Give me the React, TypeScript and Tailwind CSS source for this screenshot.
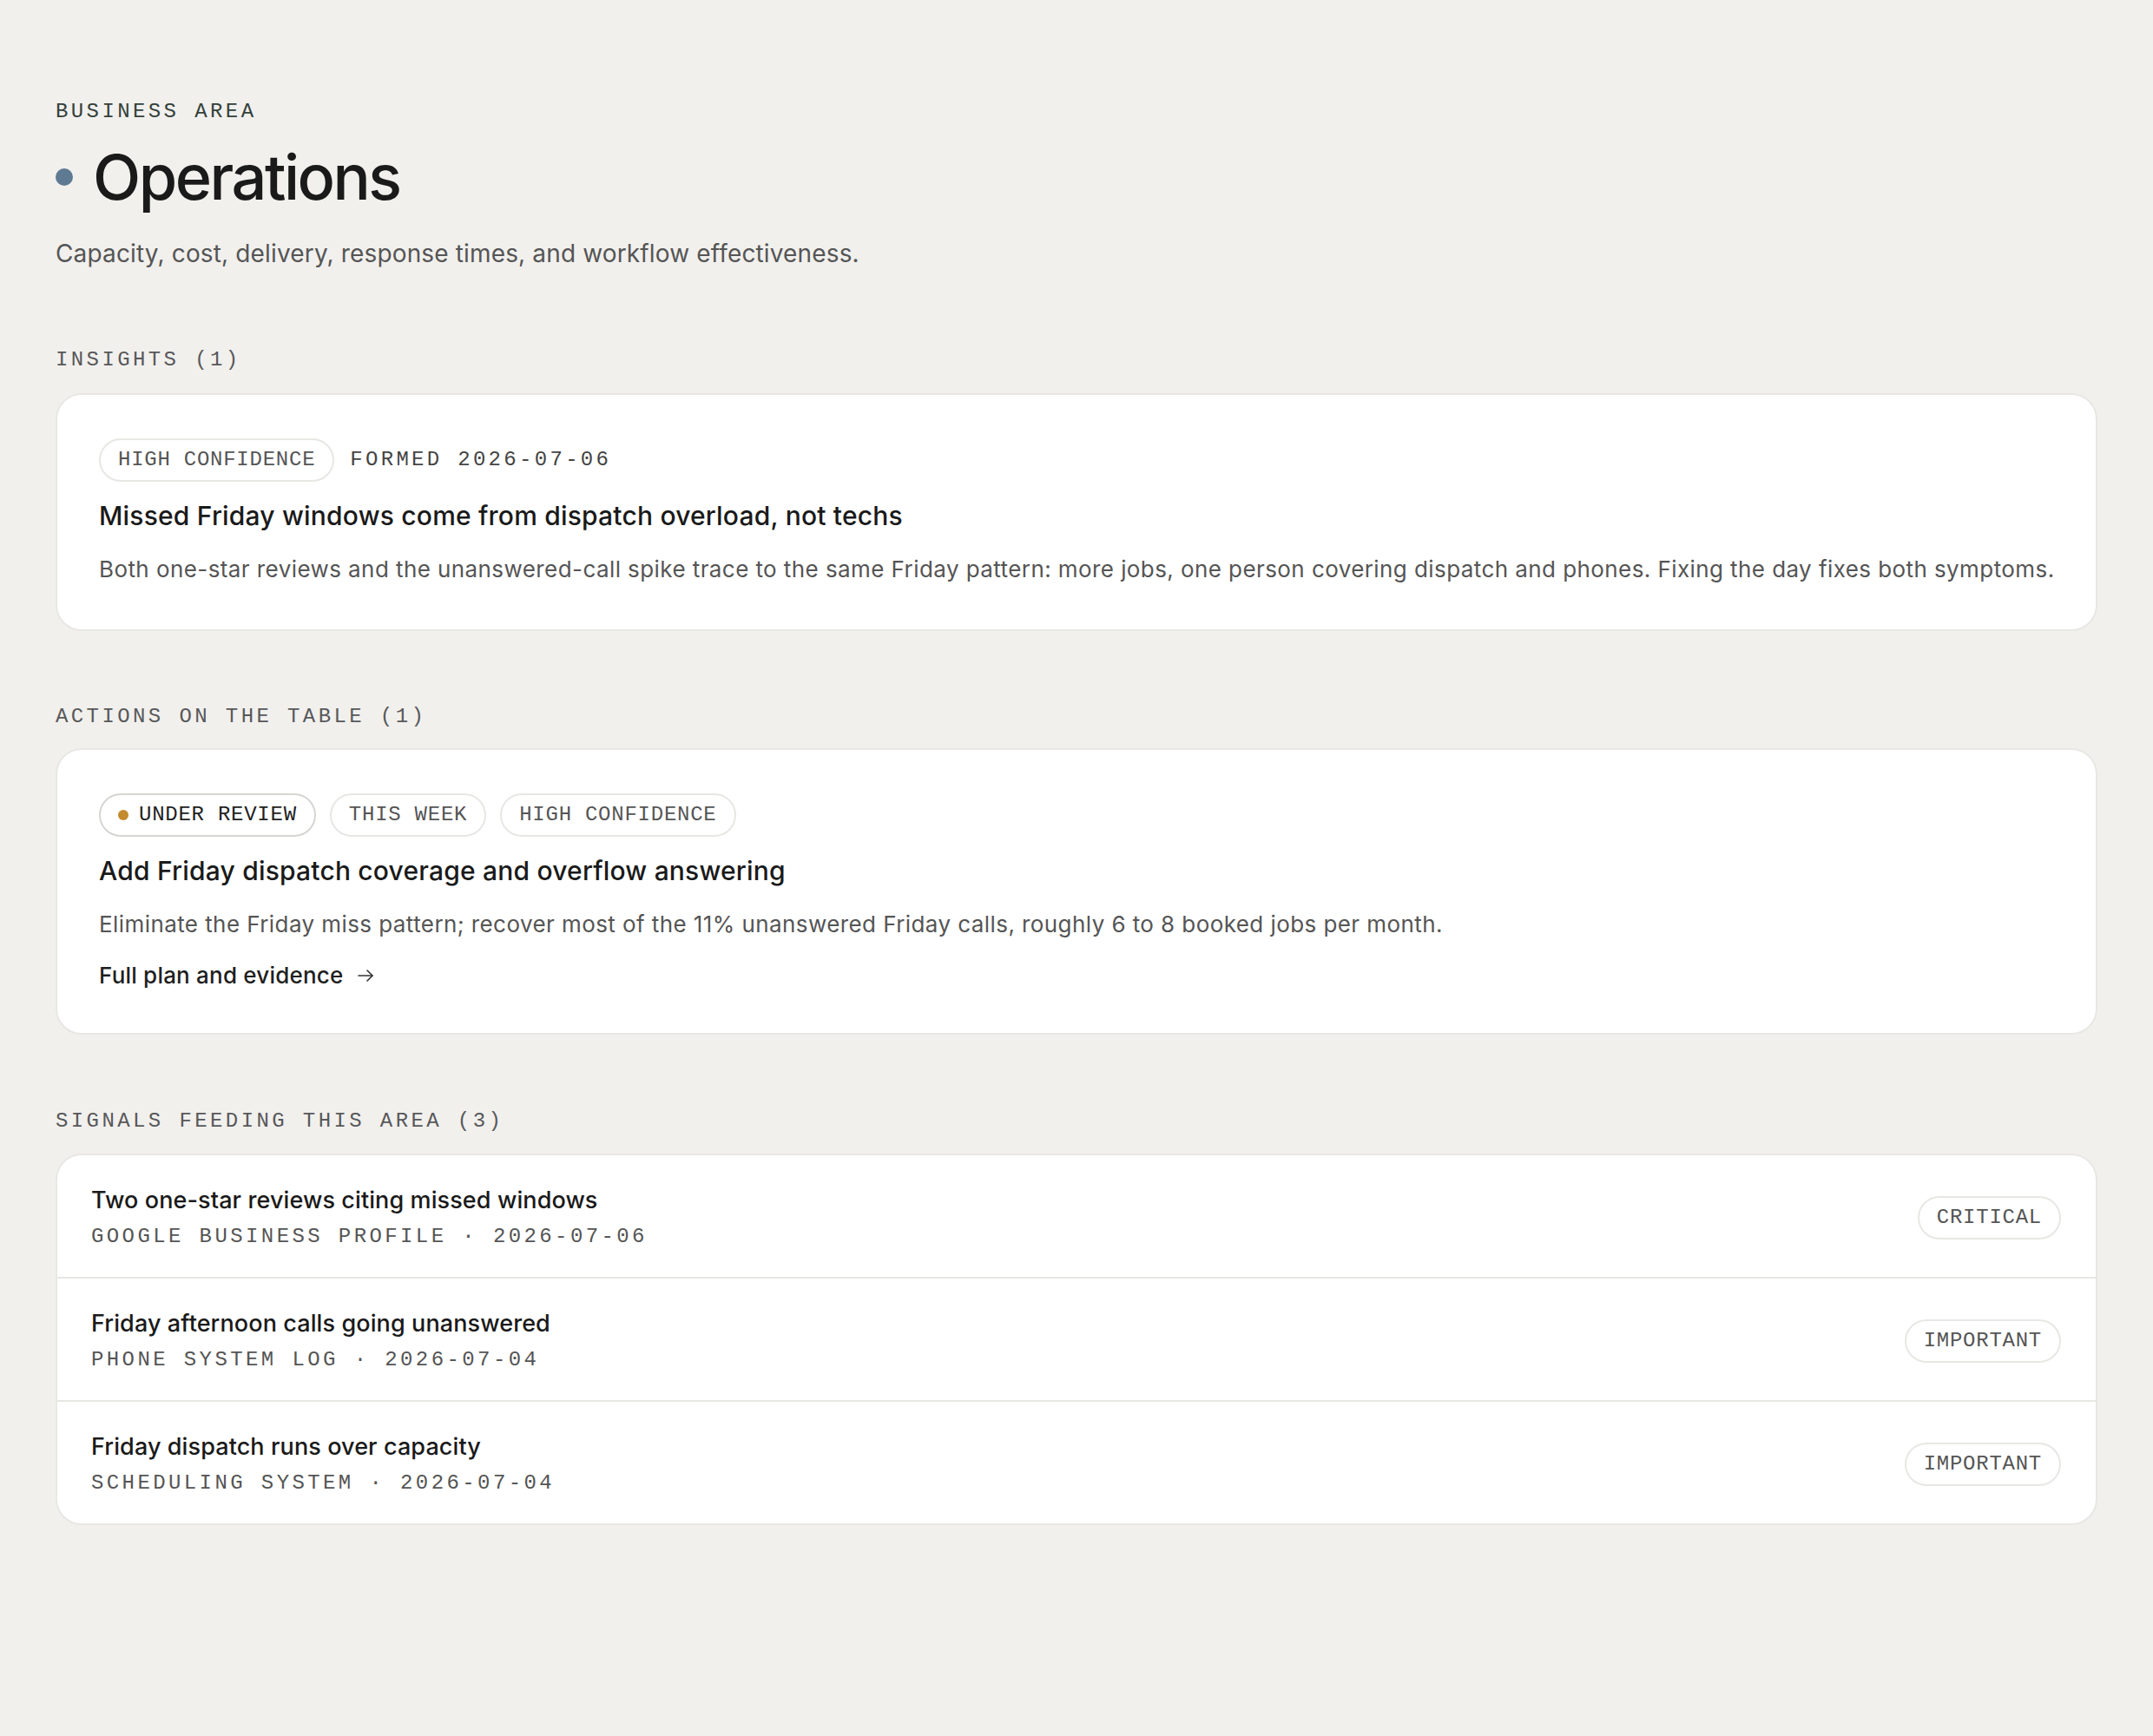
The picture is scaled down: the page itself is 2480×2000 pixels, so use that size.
const mono = "font-['Liberation_Mono',monospace]";

type Signal = {
  title: string;
  source: string;
  date: string;
  level: string;
};

const SIGNALS: Signal[] = [
  {
    title: 'Two one-star reviews citing missed windows',
    source: 'Google Business Profile',
    date: '2026-07-06',
    level: 'Critical',
  },
  {
    title: 'Friday afternoon calls going unanswered',
    source: 'Phone system log',
    date: '2026-07-04',
    level: 'Important',
  },
  {
    title: 'Friday dispatch runs over capacity',
    source: 'Scheduling system',
    date: '2026-07-04',
    level: 'Important',
  },
];

function Chip({ children, strong = false }: { children: React.ReactNode; strong?: boolean }) {
  return (
    <span
      className={`inline-flex h-[50px] items-center gap-[12px] rounded-full border-2 bg-white px-[20px] ${mono} text-[24px] uppercase tracking-[0.75px] ${
        strong ? 'border-[#d6d5d2] text-[#222222]' : 'border-[#e8e7e4] text-[#555555]'
      }`}
    >
      {children}
    </span>
  );
}

function SectionLabel({ children }: { children: React.ReactNode }) {
  return (
    <h2 className={`${mono} text-[24px] leading-[28px] uppercase tracking-[3.4px] text-[#58585a]`}>
      {children}
    </h2>
  );
}

function ArrowIcon() {
  return (
    <svg width="18" height="14" viewBox="0 0 18 14" fill="none" stroke="#333333" strokeWidth="1.6" strokeLinecap="round" strokeLinejoin="round">
      <path d="M1 7h16" />
      <path d="M11 1l6 6-6 6" />
    </svg>
  );
}

export default function App() {
  return (
    <div className="min-h-[2000px] bg-[#f1f0ed] px-[64px] pt-[115px] pb-[100px] font-['Inter',sans-serif]">
      {/* Header */}
      <p className={`${mono} text-[24px] leading-[28px] uppercase tracking-[3.4px] text-[#34403a]`}>Business area</p>
      <div className="mt-[17px] flex items-center gap-[23px]">
        <span className="h-[20px] w-[20px] rounded-full bg-[#5e7a92]" />
        <h1 className="text-[72px] leading-[88px] font-medium tracking-[-2.5px] text-[#1a1a1a]">Operations</h1>
      </div>
      <p className="mt-[24px] text-[28px] leading-[40px] tracking-[0.15px] text-[#555555]">
        Capacity, cost, delivery, response times, and workflow effectiveness.
      </p>

      {/* Insights */}
      <div className="mt-[89px]">
        <SectionLabel>Insights (1)</SectionLabel>
      </div>
      <div className="mt-[24px] rounded-[30px] border-2 border-[#e8e7e4] bg-white px-[48px] pt-[50px] pb-[49px]">
        <div className="flex items-center gap-[18px]">
          <Chip>High confidence</Chip>
          <span className={`${mono} text-[24px] uppercase tracking-[3.3px] text-[#444444]`}>Formed 2026-07-06</span>
        </div>
        <h3 className="mt-[19px] text-[30px] leading-[40px] font-medium tracking-[0.2px] text-[#1a1a1a]">
          Missed Friday windows come from dispatch overload, not techs
        </h3>
        <p className="mt-[22px] text-[26px] leading-[40px] tracking-[0.42px] text-[#555555] whitespace-nowrap">
          Both one-star reviews and the unanswered-call spike trace to the same Friday pattern: more jobs, one person
          covering dispatch and phones. Fixing the day fixes both symptoms.
        </p>
      </div>

      {/* Actions */}
      <div className="mt-[85px]">
        <SectionLabel>Actions on the table (1)</SectionLabel>
      </div>
      <div className="mt-[22px] rounded-[30px] border-2 border-[#e8e7e4] bg-white px-[48px] pt-[50px] pb-[46px]">
        <div className="flex items-center gap-[16px]">
          <Chip strong>
            <span className="h-[12px] w-[12px] rounded-full bg-[#c48a2e]" />
            Under review
          </Chip>
          <Chip>This week</Chip>
          <Chip>High confidence</Chip>
        </div>
        <h3 className="mt-[19px] text-[30px] leading-[40px] font-medium tracking-[0.2px] text-[#1a1a1a]">
          Add Friday dispatch coverage and overflow answering
        </h3>
        <p className="mt-[22px] text-[26px] leading-[40px] tracking-[0.42px] text-[#555555]">
          Eliminate the Friday miss pattern; recover most of the 11% unanswered Friday calls, roughly 6 to 8 booked jobs
          per month.
        </p>
        <a href="#" className="mt-[19px] flex w-fit items-center gap-[17px] text-[26px] leading-[40px] font-medium tracking-[0.2px] text-[#1f1f1f]">
          Full plan and evidence
          <ArrowIcon />
        </a>
      </div>

      {/* Signals */}
      <div className="mt-[86px]">
        <SectionLabel>Signals feeding this area (3)</SectionLabel>
      </div>
      <div className="mt-[23px] overflow-hidden rounded-[30px] border-2 border-[#e8e7e4] bg-white">
        {SIGNALS.map((s, i) => (
          <div
            key={s.title}
            className={`flex items-center justify-between pl-[39px] pr-[40px] pt-[34px] pb-[30px] ${i > 0 ? 'border-t-2 border-[#e8e7e4]' : ''}`}
          >
            <div>
              <p className="text-[27px] leading-[36px] font-medium tracking-[0.1px] text-[#1a1a1a]">{s.title}</p>
              <p className={`mt-[8px] ${mono} text-[24px] leading-[32px] uppercase tracking-[3.4px] text-[#555555]`}>
                {s.source} · {s.date}
              </p>
            </div>
            <Chip>{s.level}</Chip>
          </div>
        ))}
      </div>
    </div>
  );
}
